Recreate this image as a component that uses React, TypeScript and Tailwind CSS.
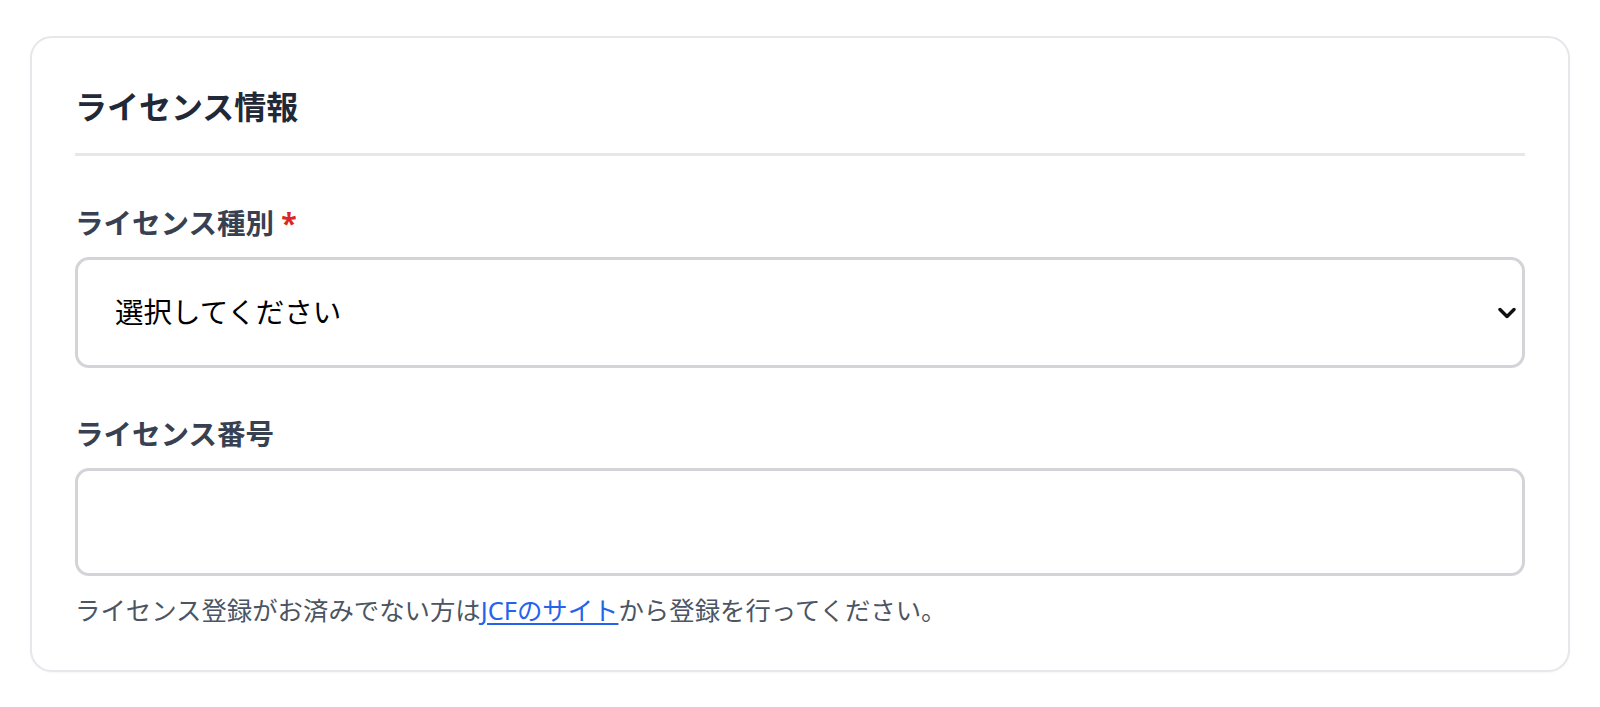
import { useState } from "react";

const jp = { fontFamily: '"Noto Sans", "Noto Sans CJK JP", sans-serif' };

function Chevron() {
    return (
        <svg width="18" height="11" viewBox="0 0 18 11" fill="none">
            <path d="M2 2l7 7 7-7" stroke="#111" strokeWidth="3.4" strokeLinecap="round" strokeLinejoin="round" />
        </svg>
    );
}

export default function App() {
    const [kind, setKind] = useState("");
    const [num, setNum] = useState("");

    return (
        <div className="min-h-screen bg-white px-[30px] pt-[36px]" style={jp}>
            <div className="rounded-[22px] border-[2.5px] border-[#e5e7eb] bg-white px-[43px] pt-[46px] pb-[42px] shadow-[0_1px_2px_rgba(0,0,0,0.04)]">
                <div className="border-b-[3px] border-[#e5e7eb] pb-[23px]">
                    <h2 className="text-[32px] leading-[46px] font-bold text-[#1f2937]">ライセンス情報</h2>
                </div>

                <div className="mt-[46px] flex flex-col gap-[13px]">
                    <label htmlFor="kind" className="text-[28.5px] leading-[42px] font-bold text-[#374151]">
                        ライセンス種別 <span className="text-[#dc2626]">*</span>
                    </label>
                    <div className="relative">
                        <select
                            id="kind"
                            value={kind}
                            onChange={(e) => setKind(e.target.value)}
                            className="h-[111px] w-full appearance-none rounded-[14px] border-[3px] border-[#d4d4d8] bg-white pl-[37px] text-[28.5px] text-black outline-none"
                            style={jp}
                        >
                            <option value="">選択してください</option>
                            <option value="a">A級</option>
                            <option value="b">B級</option>
                        </select>
                        <div className="pointer-events-none absolute right-[9px] top-1/2 -translate-y-1/2">
                            <Chevron />
                        </div>
                    </div>
                </div>

                <div className="mt-[45px] flex flex-col gap-[13px]">
                    <label htmlFor="num" className="text-[28.5px] leading-[42px] font-bold text-[#374151]">
                        ライセンス番号
                    </label>
                    <input
                        id="num"
                        type="text"
                        value={num}
                        onChange={(e) => setNum(e.target.value)}
                        className="h-[108px] w-full rounded-[14px] border-[3px] border-[#d4d4d8] bg-white px-[37px] text-[28px] outline-none"
                    />
                    <p className="mt-[3px] text-[25.4px] leading-[36px] text-[#4b5563]">
                        ライセンス登録がお済みでない方は
                        <a href="#" className="text-[#2563eb] underline underline-offset-[3px]">
                            JCFのサイト
                        </a>
                        から登録を行ってください。
                    </p>
                </div>
            </div>
        </div>
    );
}
